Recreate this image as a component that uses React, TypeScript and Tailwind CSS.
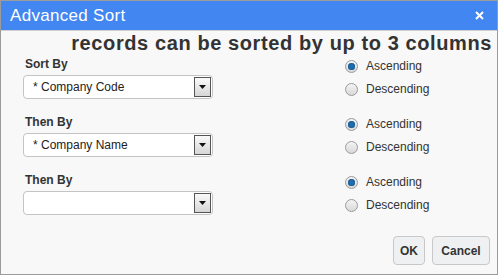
import { useState } from "react";

const fields = [
  { label: "Sort By", value: "* Company Code" },
  { label: "Then By", value: "* Company Name" },
  { label: "Then By", value: "" },
];

function Radio({ checked, onClick, label }: { checked: boolean; onClick: () => void; label: string }) {
  return (
    <label className="flex items-center gap-[8px] h-[18px] cursor-pointer" onClick={onClick}>
      <span className="w-[13px] h-[13px] rounded-full border border-[#9a9a9a] bg-gradient-to-b from-[#f4f4f4] to-[#d8d8d8] flex items-center justify-center">
        {checked && <span className="w-[7px] h-[7px] rounded-full bg-[#1f6fb0] shadow-[inset_0_0_2px_#0a3a66]" />}
      </span>
      <span className="text-[12px] text-[#333]">{label}</span>
    </label>
  );
}

function SortRow({ label, value }: { label: string; value: string }) {
  const [asc, setAsc] = useState(true);
  return (
    <div className="flex justify-between h-[58px]">
      <div className="pl-[22px] pt-[3px]">
        <div className="text-[12px] font-bold text-[#333] pl-[2px] leading-[14px]">{label}</div>
        <div className="mt-[4px] w-[190px] h-[24px] rounded-[4px] border border-[#c4c4c4] bg-white flex items-center justify-between pl-[9px] pr-[1px]">
          <span className="text-[12px] text-[#222]">{value}</span>
          <span className="w-[17px] h-[20px] border border-[#555] bg-gradient-to-b from-[#fafafa] to-[#d6d6d6] flex items-center justify-center">
            <svg width="7" height="4" viewBox="0 0 7 4">
              <path d="M0 0h7L3.5 4z" fill="#111" />
            </svg>
          </span>
        </div>
      </div>
      <div className="w-[152px] flex flex-col gap-[5px] pt-[3px]">
        <Radio checked={asc} onClick={() => setAsc(true)} label="Ascending" />
        <Radio checked={!asc} onClick={() => setAsc(false)} label="Descending" />
      </div>
    </div>
  );
}

export default function App() {
  return (
    <div className="w-[498px] h-[275px] border border-[#9b9b9b] bg-[#f8f8f8] flex flex-col font-['Liberation_Sans',Arial,sans-serif]">
      <div className="h-[30px] bg-[#4286f1] flex items-center justify-between pl-[9px] pr-[13px] border-b border-[#d0d0d0]">
        <span className="text-white text-[17px] tracking-[0.3px]">Advanced Sort</span>
        <svg width="9" height="9" viewBox="0 0 9 9">
          <path d="M1 1l7 7M8 1l-7 7" stroke="white" strokeWidth="2" />
        </svg>
      </div>
      <div className="text-right pr-[5px] text-[20px] tracking-[0.6px] leading-[21px] font-bold text-[#333] mt-[2px]">
        records can be sorted by up to 3 columns
      </div>
      <div className="flex flex-col">
        {fields.map((f, i) => (
          <SortRow key={i} label={f.label} value={f.value} />
        ))}
      </div>
      <div className="flex justify-end gap-[7px] pr-[7px] mt-[8px]">
        <button className="w-[32px] h-[29px] rounded-[4px] border border-[#c8c8c8] bg-[#eef0f2] text-[12px] font-bold text-[#333]">
          OK
        </button>
        <button className="w-[58px] h-[29px] rounded-[4px] border border-[#c8c8c8] bg-[#eef0f2] text-[12px] font-bold text-[#333]">
          Cancel
        </button>
      </div>
    </div>
  );
}
